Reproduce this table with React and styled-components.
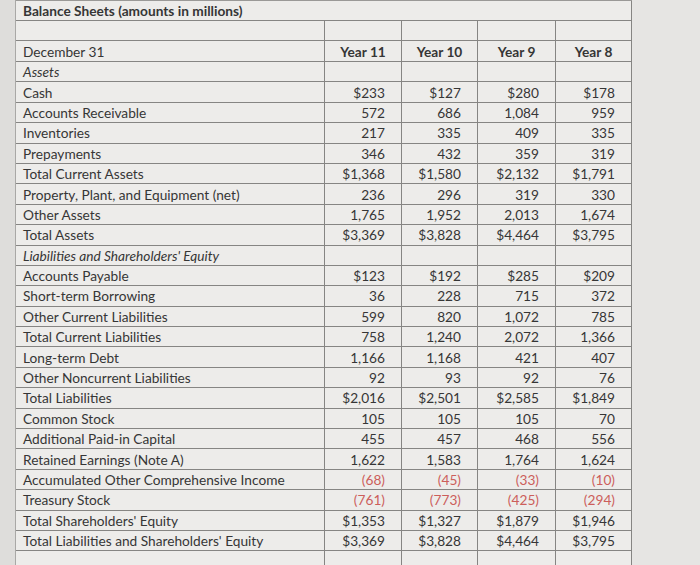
import React from "react";
import styled, { createGlobalStyle } from "styled-components";

const Global = createGlobalStyle`
  html, body { margin: 0; padding: 0; }
  body {
    width: 700px; height: 565px; overflow: hidden;
    background: #e7e6e4;
    font-family: Lato, "Open Sans", sans-serif;
    color: #3a3a3a;
  }
`;

const Page = styled.div`
  display: flex;
  height: 565px;
  overflow: hidden;
`;

const Gutter = styled.div`
  width: 15px;
  flex: none;
  background: #dedddb;
  border-right: 1px solid #a9a8a6;
`;

const Sheet = styled.div`
  display: grid;
  grid-template-columns: 309px 77px 76px 78px 76px;
  grid-template-rows: 20px 20px 21px repeat(24, 20.4px) 20px;
  align-content: start;
  background: #edecea;
  border-top: 1px solid #9a9997;
  flex: none;
`;

const Cell = styled.div`
  border-right: 1px solid #868583;
  border-bottom: 1px solid #868583;
  display: flex;
  align-items: center;
  justify-content: ${(p) => (p.$num ? "flex-end" : p.$center ? "center" : "flex-start")};
  padding: ${(p) => (p.$num ? "0 16px 0 0" : p.$center ? "0" : "0 0 0 7px")};
  font-size: 13.7px;
  font-weight: ${(p) => (p.$bold ? 700 : 400)};
  font-style: ${(p) => (p.$italic ? "italic" : "normal")};
  color: ${(p) => (p.$neg ? "#cc5e5b" : "#363636")};
  white-space: nowrap;
  overflow: hidden;
  box-sizing: border-box;
`;

const Title = styled(Cell)`
  grid-column: 1 / span 5;
  padding-left: 7px;
`;

const Rest = styled.div`
  flex: 1;
  background: #e6e5e3;
`;

const years = ["Year 11", "Year 10", "Year 9", "Year 8"];

const rows = [
  { label: "Assets", italic: true },
  { label: "Cash", v: ["$233", "$127", "$280", "$178"] },
  { label: "Accounts Receivable", v: ["572", "686", "1,084", "959"] },
  { label: "Inventories", v: ["217", "335", "409", "335"] },
  { label: "Prepayments", v: ["346", "432", "359", "319"] },
  { label: "Total Current Assets", v: ["$1,368", "$1,580", "$2,132", "$1,791"] },
  { label: "Property, Plant, and Equipment (net)", v: ["236", "296", "319", "330"] },
  { label: "Other Assets", v: ["1,765", "1,952", "2,013", "1,674"] },
  { label: "Total Assets", v: ["$3,369", "$3,828", "$4,464", "$3,795"] },
  { label: "Liabilities and Shareholders' Equity", italic: true },
  { label: "Accounts Payable", v: ["$123", "$192", "$285", "$209"] },
  { label: "Short-term Borrowing", v: ["36", "228", "715", "372"] },
  { label: "Other Current Liabilities", v: ["599", "820", "1,072", "785"] },
  { label: "Total Current Liabilities", v: ["758", "1,240", "2,072", "1,366"] },
  { label: "Long-term Debt", v: ["1,166", "1,168", "421", "407"] },
  { label: "Other Noncurrent Liabilities", v: ["92", "93", "92", "76"] },
  { label: "Total Liabilities", v: ["$2,016", "$2,501", "$2,585", "$1,849"] },
  { label: "Common Stock", v: ["105", "105", "105", "70"] },
  { label: "Additional Paid-in Capital", v: ["455", "457", "468", "556"] },
  { label: "Retained Earnings (Note A)", v: ["1,622", "1,583", "1,764", "1,624"] },
  { label: "Accumulated Other Comprehensive Income", v: ["(68)", "(45)", "(33)", "(10)"], neg: true },
  { label: "Treasury Stock", v: ["(761)", "(773)", "(425)", "(294)"], neg: true },
  { label: "Total Shareholders' Equity", v: ["$1,353", "$1,327", "$1,879", "$1,946"] },
  { label: "Total Liabilities and Shareholders' Equity", v: ["$3,369", "$3,828", "$4,464", "$3,795"] },
];

export default function App() {
  return (
    <>
      <Global />
      <Page>
        <Gutter />
        <Sheet>
          <Title $bold>Balance Sheets (amounts in millions)</Title>
          <Cell />
          {years.map((y) => <Cell key={"e" + y} />)}
          <Cell>December 31</Cell>
          {years.map((y) => (
            <Cell key={y} $center $bold>{y}</Cell>
          ))}
          {rows.map((r) => (
            <React.Fragment key={r.label}>
              <Cell $italic={r.italic}>{r.label}</Cell>
              {[0, 1, 2, 3].map((i) => (
                <Cell key={i} $num $neg={r.neg}>{r.v ? r.v[i] : ""}</Cell>
              ))}
            </React.Fragment>
          ))}
          <Cell />
          {years.map((y) => <Cell key={"b" + y} />)}
        </Sheet>
        <Rest />
      </Page>
    </>
  );
}
